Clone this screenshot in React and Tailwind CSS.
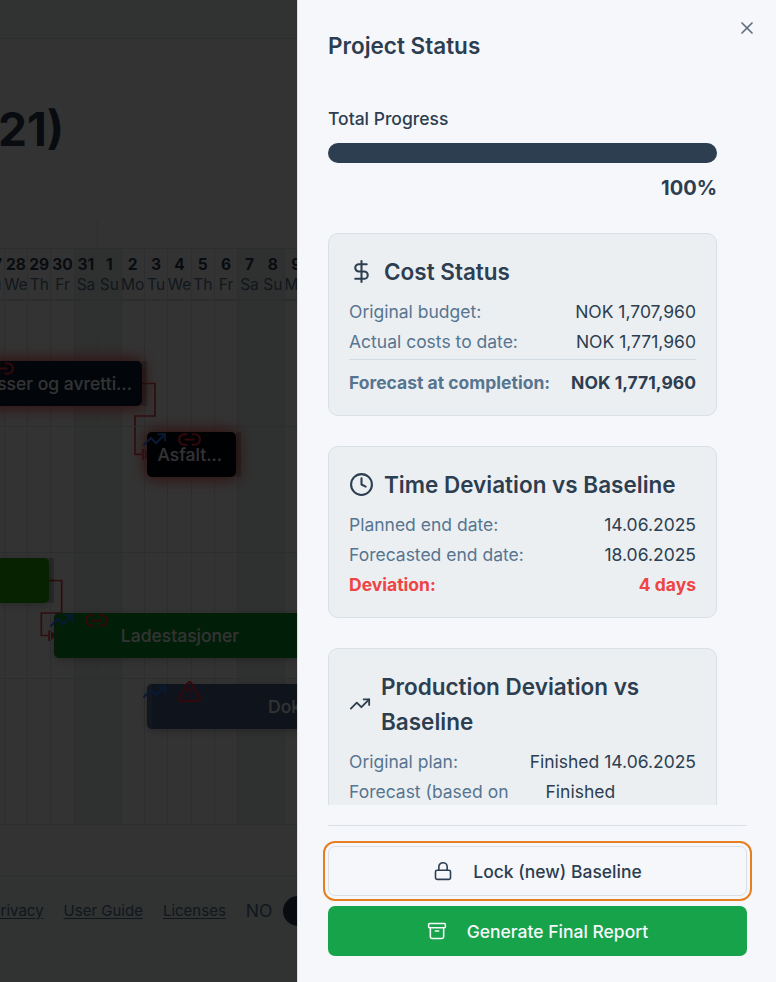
import React from 'react';
import { Archive, Clock, DollarSign, Link2, Lock, TrendingUp, TriangleAlert, X } from 'lucide-react';

const days = [
  ['27', 'Tu'], ['28', 'We'], ['29', 'Th'], ['30', 'Fr'], ['31', 'Sa'], ['1', 'Su'], ['2', 'Mo'],
  ['3', 'Tu'], ['4', 'We'], ['5', 'Th'], ['6', 'Fr'], ['7', 'Sa'], ['8', 'Su'], ['9', 'Mo'],
];

const isWeekend = (name) => name === 'Sa' || name === 'Su';

const BarIcons = ({ className, children }) => (
  <div className={`absolute flex gap-[10px] ${className}`}>{children}</div>
);

const Gantt = () => (
  <div className="relative">
    {/* Month header */}
    <div className="flex h-[29px]">
      <div className="w-[98px] border-r border-[#dfe4e8]"></div>
    </div>

    {/* Day header */}
    <div className="flex h-[53px] border-t border-b-2 border-t-[#dde3e7] border-b-[#dde3e7]">
      <div className="-ml-[18.67px] flex">
        {days.map(([num, name]) => (
          <div
            key={num}
            className={`flex w-[23.37px] shrink-0 flex-col items-center border-r border-[#dfe4e8] pt-[6px] text-[15.5px] leading-5 ${
              isWeekend(name) ? 'bg-[#ebf0ee]' : ''
            }`}
          >
            <span className="font-bold text-[#2c3e50]">{num}</span>
            <span className="text-[#577590]">{name}</span>
          </div>
        ))}
      </div>
    </div>

    {/* Chart body */}
    <div className="relative h-[524px] border-b border-[#dde3e7]">
      <svg className="absolute left-0 top-0 h-[524px] w-[297px]" fill="none" stroke="#ef4444" strokeWidth="1.7">
        <path d="M142 82.5H155V115H135V153.300H142" />
        <path d="M143 148v11M146 149v9" />
        <path d="M49 279.500H61.700V312H41.300V334.500H48M49 329.500v10.500" />
        <path d="M51 330l5 4.500l-5 4.500z" fill="#ef4444" stroke="none" />
      </svg>
      <div className="-ml-[18.67px] flex h-full">
        {days.map(([num, name]) => (
          <div
            key={num}
            className={`w-[23.37px] shrink-0 border-r border-[#dfe4e8] ${isWeekend(name) ? 'bg-[#c8d8d0]/35' : ''}`}
          ></div>
        ))}
      </div>
      <div className="absolute inset-x-0 top-0">
        <div className="h-[126px] border-b border-[#dde3e7]"></div>
        <div className="h-[126px] border-b border-[#dde3e7]"></div>
        <div className="h-[126px] border-b border-[#dde3e7]"></div>
      </div>

      {/* Tasks */}
      <div className="absolute right-[155px] top-[60px] flex h-[45px] w-[260px] items-center justify-end rounded-[5px] bg-[#0a1c36] pr-[10px] pt-[2px] text-[17.5px] font-medium text-white shadow-[0_0_15px_2px_#ef4444]">
        sser og avretti...
      </div>
      <div className="absolute left-[142px] top-[60px] h-[45px] w-[5px] bg-black/20"></div>
      <div className="absolute left-[147px] top-[131px] flex h-[45px] w-[89px] items-center rounded-[5px] bg-[#04060c] pl-[10.5px] pt-[2px] text-[17.5px] font-medium text-white shadow-[0_0_15px_2px_#ef4444]">
        Asfalt...
      </div>
      <div className="absolute left-[236px] top-[131px] h-[45px] w-[5px] bg-black/20"></div>
      <div className="absolute left-[44px] top-[257px] h-[45px] w-[10px] bg-black/20"></div>
      <div className="absolute left-0 top-[257px] h-[45px] w-[49px] rounded-r-[5px] bg-[#1eaa00] shadow-[0_2px_8px_rgba(0,0,0,0.25)]"></div>
      <div className="absolute left-[54px] top-[312px] flex h-[45px] w-[252px] items-center justify-center overflow-hidden rounded-[5px] border-l-[5px] border-[#148a28] bg-[#059628] pr-[5px] pt-[2px] text-[17.5px] font-medium text-white shadow-[0_2px_8px_rgba(0,0,0,0.25)]">
        Ladestasjoner
      </div>
      <div className="absolute left-[147px] top-[383px] flex h-[45px] w-[320px] items-center rounded-[5px] border-l-[5px] border-[#5b6d91] bg-[#4b5f87] pl-[116px] pt-[2px] text-[17.5px] font-medium text-white shadow-[0_2px_8px_rgba(0,0,0,0.25)]">
        Dokumentasjon
      </div>

      <BarIcons className="left-[-10px] top-[55px] text-red-500">
        <Link2 size={25} />
      </BarIcons>
      <BarIcons className="left-[142px] top-[126px]">
        <TrendingUp size={25} className="text-blue-500" />
        <Link2 size={25} className="text-red-500" />
      </BarIcons>
      <BarIcons className="left-[49px] top-[307px]">
        <TrendingUp size={25} className="text-blue-500" />
        <Link2 size={25} className="text-red-500" />
      </BarIcons>
      <BarIcons className="left-[142px] top-[378px]">
        <TrendingUp size={25} className="text-blue-500" />
        <TriangleAlert size={25} className="text-red-500" />
      </BarIcons>
    </div>
  </div>
);

const ProjectPage = () => (
  <div className="relative flex h-full w-[297px] shrink-0 flex-col overflow-hidden bg-white">
    <header className="h-[39px] shrink-0 border-b border-[#e3e7ec] bg-[#f6f7fb]"></header>
    <div className="h-[180px] shrink-0 pt-[61px]">
      <h1 className="-ml-[2px] text-[46px] font-bold leading-[58px] text-[#2c3e50]">21)</h1>
    </div>
    <Gantt />
    <footer className="mt-[50px] flex flex-1 items-start border-t border-[#e0e5e9] bg-[#f6f7fb] pt-5 text-[#577590]">
      <div className="flex h-[30px] shrink-0 items-center gap-5 text-[15px]">
        <a className="-ml-[9px] underline underline-offset-2">Privacy</a>
        <a className="underline underline-offset-2">User Guide</a>
        <a className="underline underline-offset-2">Licenses</a>
        <span className="text-[17.5px]">NO</span>
      </div>
      <div className="ml-[10.5px] h-[30px] w-[60px] shrink-0 rounded-full bg-[#2c3e50]"></div>
    </footer>
    <div className="absolute inset-0 bg-black/80"></div>
  </div>
);

const Card = ({ icon, title, children }) => (
  <section className="mb-[30px] rounded-[10px] border border-[#d8e0e6] bg-[#ebeff2] p-5">
    <h3 className="mb-[10px] flex items-center gap-[10px] text-[22.5px] font-semibold leading-[35px]">
      {icon}
      {title}
    </h3>
    {children}
  </section>
);

const Row = ({ label, value, className = 'mb-[5px]', labelClass = 'text-[#577590]', valueClass = '' }) => (
  <div className={`flex justify-between leading-[25px] ${className}`}>
    <span className={labelClass}>{label}</span>
    <span className={valueClass}>{value}</span>
  </div>
);

const StatusPanel = () => (
  <aside className="relative flex h-full flex-1 flex-col border-l border-[#d8e0e6] bg-[#f6f7fb] pl-[30px] pr-[29px] text-[17.5px] text-[#2c3e50]">
    <button className="absolute right-[19px] top-[18px] text-[#5d6d7b]">
      <X size={20} strokeWidth={2} />
    </button>
    <h2 className="mt-[28px] text-[22.5px] font-semibold leading-[35px]">Project Status</h2>

    <div className="mt-[43px] h-[699px] shrink-0 overflow-hidden pr-[30px]">
      <div className="mb-[30px]">
        <p className="mb-[11px] font-medium leading-[26px]">Total Progress</p>
        <div className="h-5 overflow-hidden rounded-full bg-[#d8e0e6]">
          <div className="h-full bg-[#2c3e50]" style={{ width: '100%' }}></div>
        </div>
        <p className="mt-[10px] text-right text-[20px] font-bold leading-[30px]">100%</p>
      </div>

      <Card icon={<DollarSign size={25} strokeWidth={2} />} title="Cost Status">
        <Row label="Original budget:" value="NOK 1,707,960" />
        <Row label="Actual costs to date:" value="NOK 1,771,960" />
        <Row
          label="Forecast at completion:"
          value="NOK 1,771,960"
          className="border-t border-[#d3dce4] pt-[10px] font-bold"
        />
      </Card>

      <Card icon={<Clock size={25} strokeWidth={2} />} title="Time Deviation vs Baseline">
        <Row label="Planned end date:" value="14.06.2025" />
        <Row label="Forecasted end date:" value="18.06.2025" />
        <Row label="Deviation:" value="4 days" className="font-bold text-[#ef4444]" labelClass="" />
      </Card>

      <Card
        icon={<TrendingUp size={22} strokeWidth={2} className="shrink-0" />}
        title="Production Deviation vs Baseline"
      >
        <Row label="Original plan:" value="Finished 14.06.2025" />
        <Row label="Forecast (based on" value="Finished" valueClass="w-[150.5px]" />
      </Card>
    </div>

    <div className="mt-5 flex flex-col gap-[10px] border-t border-[#d8e0e6] pt-5">
      <button className="flex h-[50px] items-center justify-center gap-5 rounded-[7px] border border-[#d8e0e6] font-medium outline-2 outline-offset-[3px] outline-[#e67e22]">
        <Lock size={20} strokeWidth={1.9} />
        <span className="pt-[2px]">Lock (new) Baseline</span>
      </button>
      <button className="flex h-[50px] items-center justify-center gap-5 rounded-[7px] bg-[#16a34a] font-medium text-[#f6f7fb]">
        <Archive size={20} strokeWidth={1.9} />
        <span className="pt-[2px]">Generate Final Report</span>
      </button>
    </div>
  </aside>
);

const App = () => (
  <div className="flex h-screen w-full overflow-hidden font-[Inter,sans-serif]">
    <ProjectPage />
    <StatusPanel />
  </div>
);

export default App;
